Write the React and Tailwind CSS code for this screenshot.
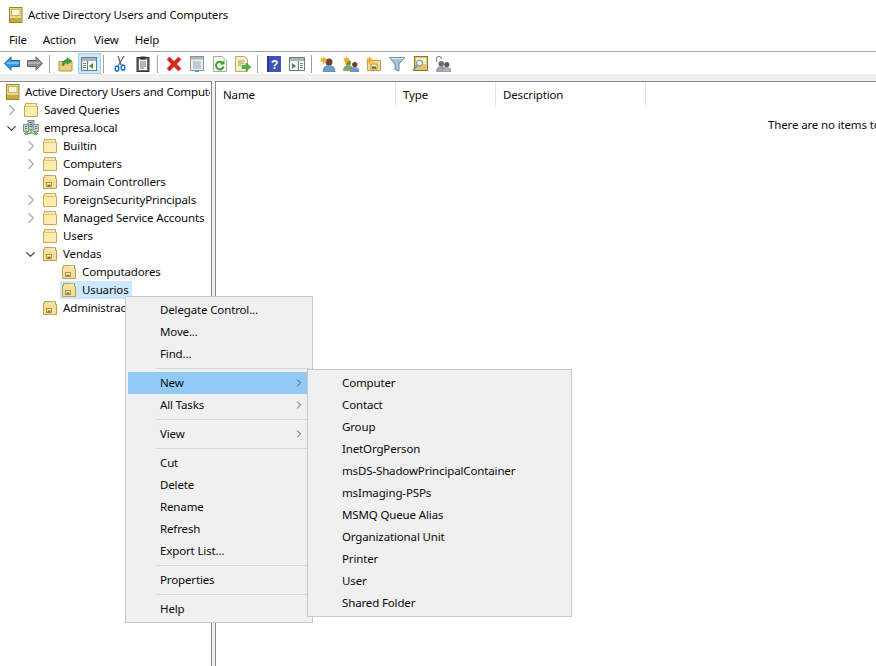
import { ChevronRight, ChevronDown } from "lucide-react";

function Book({ className = "" }) {
  return (
    <svg width="16" height="16" viewBox="0 0 16 16" className={className}>
      <rect x="1.500" y="0.500" width="12.500" height="15" fill="#ecd68c" stroke="#9a8436" />
      <rect x="3.500" y="2.500" width="8.500" height="6" fill="#fbf6d8" stroke="#c7b266" />
      <rect x="2" y="11" width="11.500" height="4" fill="#c9a83e" />
    </svg>
  );
}

function Folder() {
  return (
    <svg width="16" height="16" viewBox="0 0 16 16" className="shrink-0">
      <path d="M1.500 3.500h1v-2h11v3h1v10h-13z" fill="#fbe9a8" stroke="#c9a94f" />
      <rect x="9" y="1" width="4" height="1" fill="#8dbbe0" />
      <path d="M2.500 4.500h11" stroke="#e0c470" />
      <rect x="2" y="5" width="12" height="9" fill="#fdecb0" />
    </svg>
  );
}

function OuFolder() {
  return (
    <svg width="16" height="16" viewBox="0 0 16 16" className="shrink-0">
      <path d="M1.500 3.500h1v-2h11v3h1v10h-13z" fill="#f9e3a2" stroke="#bd9f50" />
      <rect x="9" y="1" width="4" height="1" fill="#8dbbe0" />
      <rect x="2" y="5" width="12" height="9" fill="#f7dd9c" />
      <rect x="4.500" y="8.500" width="5" height="4" fill="#fdf3c4" stroke="#93802f" strokeWidth="0.800" />
      <rect x="5.500" y="10.500" width="3" height="2" fill="#8a7426" />
    </svg>
  );
}

function Domain() {
  return (
    <svg width="16" height="16" viewBox="0 0 16 16" className="shrink-0">
      <rect x="5" y="0.500" width="6" height="9" fill="#b9c6cc" stroke="#7d8a90" />
      <rect x="0.500" y="4.500" width="5" height="7" fill="#c8d2d6" stroke="#87949a" />
      <rect x="10.500" y="4.500" width="5" height="7" fill="#c8d2d6" stroke="#87949a" />
      <path d="M6.500 2.500h3M6.500 4.500h3M6.500 6.500h3M2 6.500h2M2 8.500h2M12 6.500h2M12 8.500h2" stroke="#5f6d73" />
      <path d="M1 13.500h14" stroke="#8a979c" />
      <rect x="2" y="12" width="3" height="3" fill="#6cbf3c" />
      <rect x="11" y="12" width="3" height="3" fill="#6cbf3c" />
      <rect x="6.500" y="10" width="3" height="3" fill="#7ccf48" />
    </svg>
  );
}

function Arrow({ color, edge, flip }) {
  return (
    <svg width="16" height="15" viewBox="0 0 16 15" className={flip ? "-scale-x-100" : ""}>
      <path d="M0.500 7.500 7 0.800v3.700h8.500v6H7v3.700z" fill={color} stroke={edge} />
      <path d="M3 7h12" stroke="#ffffff" strokeOpacity="0.350" strokeWidth="2" />
    </svg>
  );
}

function FolderUp() {
  return (
    <svg width="16" height="16" viewBox="0 0 16 16">
      <path d="M1 5.500h13v9.500H1z" fill="#edcf7f" stroke="#b2923f" />
      <path d="M1 5.500h5l1-1.500h3" fill="none" stroke="#b2923f" />
      <path d="M4 9c0-3 2-5 5-5V1.500L14 5l-5 3.500V6.500C7 6.500 6 8 6 10z" fill="#3da33a" stroke="#2b7a2a" strokeWidth="0.500" />
    </svg>
  );
}

function ConsoleIcon({ pane }) {
  return (
    <svg width="16" height="14" viewBox="0 0 16 14">
      <rect x="0.500" y="0.500" width="15" height="13" fill="#f4f6f7" stroke="#6f7a7f" />
      <rect x="1" y="1" width="14" height="3" fill="#a9b4ba" />
      {pane === "left" ? (
        <>
          <path d="M6.500 4v9" stroke="#6f7a7f" />
          <path d="M2 6.500h3M2 8.500h3M2 10.500h3" stroke="#5e8a8f" />
          <path d="M12 6v6L8 9z" fill="#2f9e3a" />
        </>
      ) : (
        <>
          <path d="M9.500 4v9" stroke="#6f7a7f" />
          <path d="M11 6.500h3M11 8.500h3M11 10.500h3" stroke="#7f8a90" />
          <path d="M3 6v6l4-3z" fill="#2f9e3a" />
        </>
      )}
    </svg>
  );
}

function Scissors() {
  return (
    <svg width="14" height="16" viewBox="0 0 14 16">
      <path d="M5 10 11 0" stroke="#6f7478" strokeWidth="1.300" fill="none" />
      <path d="M8 9 5 0" stroke="#3d6f9e" strokeWidth="1.300" fill="none" />
      <ellipse cx="4" cy="12.500" rx="1.800" ry="2.600" fill="none" stroke="#1a6fd1" strokeWidth="1.500" />
      <ellipse cx="10" cy="11.500" rx="1.800" ry="2.600" fill="none" stroke="#1a6fd1" strokeWidth="1.500" />
    </svg>
  );
}

function Clipboard() {
  return (
    <svg width="14" height="16" viewBox="0 0 14 16">
      <rect x="1" y="1.500" width="12" height="14" fill="#6d6d6d" stroke="#333" />
      <rect x="3" y="3.500" width="8" height="10.500" fill="#f2f2f2" />
      <rect x="4.500" y="0.500" width="5" height="3" fill="#333" />
      <path d="M4 6h6M4 8h6M4 10h6M4 12h4" stroke="#777" />
    </svg>
  );
}

function RedX() {
  return (
    <svg width="16" height="16" viewBox="0 0 16 16">
      <path d="M1 3.500 3.500 1 8 5.500 12.500 1 15 3.500 10.500 8 15 12.500 12.500 15 8 10.500 3.500 15 1 12.500 5.500 8z" fill="#e0211f" stroke="#b51614" strokeWidth="0.500" />
    </svg>
  );
}

function Props() {
  return (
    <svg width="16" height="16" viewBox="0 0 16 16">
      <rect x="1.500" y="0.500" width="13" height="14" fill="#eceff1" stroke="#8b969c" />
      <rect x="2" y="1" width="12" height="2.500" fill="#aab6bc" />
      <path d="M4 6h8M4 8h8M4 10h8M4 12h8" stroke="#9aa5ab" />
      <rect x="6" y="14" width="4" height="2" fill="#3aa0e0" />
    </svg>
  );
}

function Refresh() {
  return (
    <svg width="14" height="16" viewBox="0 0 14 16">
      <path d="M0.500 0.500h9l4 4v11H0.500z" fill="#f7f7f2" stroke="#a9a9a0" />
      <path d="M10.500 10.500a3.800 3.800 0 1 1-1-3.600" fill="none" stroke="#3aa13a" strokeWidth="2" />
      <path d="M11.500 4v4.500H7z" fill="#3aa13a" />
    </svg>
  );
}

function Export() {
  return (
    <svg width="16" height="16" viewBox="0 0 16 16">
      <path d="M0.500 0.500h9l3 3v12H0.500z" fill="#f6efc8" stroke="#b8ab6a" />
      <path d="M3 5h6M3 7h6M3 9h3" stroke="#a89a58" />
      <path d="M7 9.500h4V7l5 4-5 4v-2.500H7z" fill="#48b543" stroke="#2f8a2c" strokeWidth="0.500" />
    </svg>
  );
}

function HelpBook() {
  return (
    <svg width="14" height="16" viewBox="0 0 14 16">
      <rect width="14" height="16" fill="#3f55b5" />
      <rect width="2" height="16" fill="#2a3a8a" />
      <text x="4" y="13" fontSize="12" fontWeight="700" fill="#fff" fontFamily="Liberation Sans, sans-serif">?</text>
    </svg>
  );
}

function Person({ skin = "#6e4424", body = "#6f9cc8" }) {
  return (
    <g>
      <circle cx="9" cy="6" r="3.500" fill={skin} />
      <path d="M3 16c0-4.500 2-6.500 6-6.500s6 2 6 6.500z" fill={body} stroke="#4c7196" strokeWidth="0.500" />
    </g>
  );
}

function Star() {
  return <path d="M3.500 0 4.300 2.500 6.800 1.500 5.500 3.800 7.500 5.500 4.800 5.500 3.500 8 2.200 5.500 0 5.500 1.500 3.800 0.300 1.500 2.700 2.500z" fill="#f0a81e" />;
}

function NewUser() {
  return (
    <svg width="16" height="16" viewBox="0 0 16 16">
      <Person />
      <Star />
    </svg>
  );
}

function NewGroup() {
  return (
    <svg width="16" height="16" viewBox="0 0 16 16">
      <g transform="translate(-2 2) scale(0.8)"><Person skin="#6b8f3a" body="#86a85a" /></g>
      <g transform="translate(5 4) scale(0.75)"><Person /></g>
      <Star />
    </svg>
  );
}

function NewOu() {
  return (
    <svg width="16" height="16" viewBox="0 0 16 16">
      <path d="M1.500 4.500h13v10h-13z" fill="#f4d98e" stroke="#c0a050" />
      <rect x="5" y="8" width="6" height="5" fill="#fdf3c4" stroke="#8a7426" strokeWidth="0.700" />
      <rect x="6" y="10.500" width="4" height="2" fill="#6f5c18" />
      <Star />
    </svg>
  );
}

function Funnel() {
  return (
    <svg width="16" height="16" viewBox="0 0 16 16">
      <path d="M0.500 1.500h15L10 8v7l-4-1.500V8z" fill="#a3c3d6" stroke="#6b8a9c" />
      <path d="M2 2.500h12" stroke="#e2eef5" />
    </svg>
  );
}

function FindBook() {
  return (
    <svg width="16" height="16" viewBox="0 0 16 16">
      <rect x="2.500" y="0.500" width="13" height="14" fill="#d9c676" stroke="#927a24" />
      <rect x="4" y="2" width="10" height="6" fill="#f8f0c8" />
      <circle cx="7.500" cy="7" r="3" fill="#dfeef7" stroke="#7b8c96" />
      <path d="M5 9.500 1 14.500" stroke="#7b8c96" strokeWidth="1.600" />
    </svg>
  );
}

function Delegate() {
  return (
    <svg width="16" height="16" viewBox="0 0 16 16">
      <path d="M1.500 6V3a2.500 2.500 0 0 1 5 0" fill="none" stroke="#8a8a8a" strokeWidth="1.200" />
      <g transform="translate(-1 3) scale(0.8)"><Person skin="#6d6d6d" body="#a4a4a4" /></g>
      <g transform="translate(5 4) scale(0.75)"><Person skin="#5a5a5a" body="#b2b2b2" /></g>
    </svg>
  );
}

function ToolButton({ children, active }) {
  return (
    <div className={`w-[23px] h-[21px] flex items-center justify-center shrink-0 border ${active ? "bg-[#cce8ff] border-[#99d1ff]" : "border-transparent"}`}>
      {children}
    </div>
  );
}

function ToolSep() {
  return <div className="w-px h-[18px] ml-[2px] mr-[5px] bg-[#a0a0a0] shrink-0" />;
}

function Toolbar() {
  return (
    <div className="h-[22px] flex items-center pl-[0.5px] pt-[1px] bg-white">
      <ToolButton><Arrow color="#2f9be0" edge="#1c6ea8" /></ToolButton>
      <ToolButton><Arrow color="#8f8f8f" edge="#666666" flip /></ToolButton>
      <ToolSep />
      <ToolButton><FolderUp /></ToolButton>
      <ToolButton active><ConsoleIcon pane="left" /></ToolButton>
      <ToolSep />
      <ToolButton><Scissors /></ToolButton>
      <ToolButton><Clipboard /></ToolButton>
      <ToolSep />
      <ToolButton><RedX /></ToolButton>
      <ToolButton><Props /></ToolButton>
      <ToolButton><Refresh /></ToolButton>
      <ToolButton><Export /></ToolButton>
      <ToolSep />
      <ToolButton><HelpBook /></ToolButton>
      <ToolButton><ConsoleIcon pane="right" /></ToolButton>
      <ToolSep />
      <ToolButton><NewUser /></ToolButton>
      <ToolButton><NewGroup /></ToolButton>
      <ToolButton><NewOu /></ToolButton>
      <ToolButton><Funnel /></ToolButton>
      <ToolButton><FindBook /></ToolButton>
      <ToolButton><Delegate /></ToolButton>
    </div>
  );
}

const treeRows = [
  { label: "Saved Queries", level: 1, arrow: "closed", icon: "folder" },
  { label: "empresa.local", level: 1, arrow: "open", icon: "domain" },
  { label: "Builtin", level: 2, arrow: "closed", icon: "folder" },
  { label: "Computers", level: 2, arrow: "closed", icon: "folder" },
  { label: "Domain Controllers", level: 2, icon: "ou" },
  { label: "ForeignSecurityPrincipals", level: 2, arrow: "closed", icon: "folder" },
  { label: "Managed Service Accounts", level: 2, arrow: "closed", icon: "folder" },
  { label: "Users", level: 2, icon: "folder" },
  { label: "Vendas", level: 2, arrow: "open", icon: "ou" },
  { label: "Computadores", level: 3, icon: "ou" },
  { label: "Usuarios", level: 3, icon: "ou", selected: true },
  { label: "Administracao", level: 2, icon: "ou" },
];

const levelPad = { 1: "pl-[5px]", 2: "pl-[24px]", 3: "pl-[43px]" };

function TreeRow({ row }) {
  const Icon = row.icon === "folder" ? Folder : row.icon === "ou" ? OuFolder : Domain;
  return (
    <div className={`h-[18px] flex items-center whitespace-nowrap ${levelPad[row.level]}`}>
      <span className="w-[13px] flex justify-center shrink-0 mr-[4px]">
        {row.arrow === "closed" && <ChevronRight size={18} strokeWidth={1.5} color="#a6a6a6" className="shrink-0" />}
        {row.arrow === "open" && <ChevronDown size={15} strokeWidth={2} color="#404040" className="shrink-0" />}
      </span>
      <span className={`flex items-center h-[18px] pl-[1px] ${row.selected ? "bg-[#cce8ff]" : ""}`}>
        <Icon />
        <span className="ml-[5px] pr-[3px]">{row.label}</span>
      </span>
    </div>
  );
}

function Tree() {
  return (
    <div className="w-[212px] shrink-0 bg-white border-t border-r border-[#828790] pt-[1px] overflow-hidden">
      <div className="h-[18px] w-[210px] overflow-hidden flex items-center pl-[5px] whitespace-nowrap">
        <Book className="shrink-0" />
        <span className="ml-[4px]">Active Directory Users and Computers</span>
      </div>
      {treeRows.map((row) => (
        <TreeRow key={row.label} row={row} />
      ))}
    </div>
  );
}

function ColumnHead({ width, children }) {
  return (
    <div className="h-[25px] flex items-center pl-[7px] border-r border-[#e5e5e5] shrink-0" style={{ width }}>
      {children}
    </div>
  );
}

function ListPane() {
  return (
    <div className="flex-1 min-w-0 ml-[3px] bg-white border-t border-l border-[#828790] overflow-hidden">
      <div className="flex">
        <ColumnHead width={180}>Name</ColumnHead>
        <ColumnHead width={100}>Type</ColumnHead>
        <ColumnHead width={150}>Description</ColumnHead>
      </div>
      <div className="mt-[9px] pl-[552px] whitespace-nowrap">There are no items to show in this view.</div>
    </div>
  );
}

const mainItems = [
  ["Delegate Control..."],
  ["Move..."],
  ["Find..."],
  "sep",
  ["New", true, true],
  ["All Tasks", true],
  "sep",
  ["View", true],
  "sep",
  ["Cut"],
  ["Delete"],
  ["Rename"],
  ["Refresh"],
  ["Export List..."],
  "sep",
  ["Properties"],
  "sep",
  ["Help"],
];

const newItems = [
  "Computer",
  "Contact",
  "Group",
  "InetOrgPerson",
  "msDS-ShadowPrincipalContainer",
  "msImaging-PSPs",
  "MSMQ Queue Alias",
  "Organizational Unit",
  "Printer",
  "User",
  "Shared Folder",
];

function MenuSep() {
  return <div className="h-[7px] flex items-center pl-[28px]"><div className="h-px w-full bg-[#d7d7d7]" /></div>;
}

function ContextMenu() {
  return (
    <div className="absolute left-[125px] top-[296px] w-[188px] p-[2px] bg-[#f0f0f0] border border-[#c8c8c8]">
      {mainItems.map((item, i) =>
        item === "sep" ? (
          <MenuSep key={i} />
        ) : (
          <div key={item[0]} className={`h-[22px] flex items-center justify-between pl-[32px] pr-[5px] ${item[2] ? "bg-[#91c9f7]" : ""}`}>
            <span>{item[0]}</span>
            {item[1] && <ChevronRight size={12} strokeWidth={2} color="#505050" />}
          </div>
        )
      )}
    </div>
  );
}

function SubMenu() {
  return (
    <div className="absolute left-[307px] top-[369px] w-[265px] p-[2px] bg-[#f0f0f0] border border-[#c8c8c8]">
      {newItems.map((label) => (
        <div key={label} className="h-[22px] flex items-center pl-[32px]">{label}</div>
      ))}
    </div>
  );
}

export default function App() {
  return (
    <div className="relative w-[876px] h-[666px] overflow-hidden bg-white text-[11.5px] tracking-[-0.14px] text-[#0a0a0a] font-['Noto_Sans','Open_Sans',sans-serif]">
      {/* Title */}
      <div className="h-[30px] flex items-center pl-[8px]">
        <Book />
        <span className="ml-[4px]">Active Directory Users and Computers</span>
      </div>

      {/* Menu */}
      <div className="h-[22px] flex items-center gap-[16px] pl-[9px] pb-[2px] border-b border-[#a0a0a0]">
        <span>File</span>
        <span>Action</span>
        <span className="ml-[2px]">View</span>
        <span>Help</span>
      </div>

      <Toolbar />
      <div className="h-[7px] bg-[#f0f0f0]" />

      <div className="flex h-[585px] bg-[#f0f0f0]">
        <Tree />
        <ListPane />
      </div>

      <ContextMenu />
      <SubMenu />
    </div>
  );
}
